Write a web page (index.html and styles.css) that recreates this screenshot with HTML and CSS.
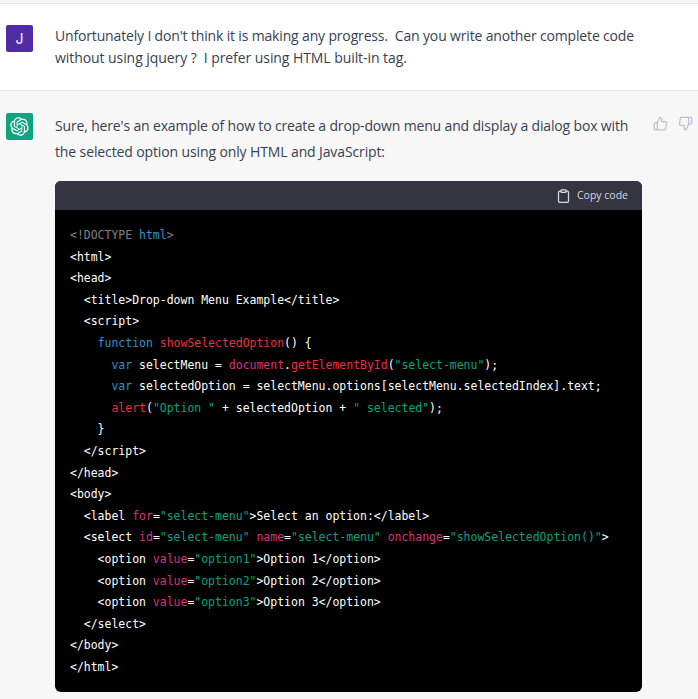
FILE: index.html
```html
<!DOCTYPE html>
<html lang="en">
<head>
<meta charset="utf-8">
<title>Conversation</title>
<link rel="stylesheet" href="styles.css">
</head>
<body>
<div class="top-strip"></div>
<section class="message user">
  <div class="avatar avatar-user">J</div>
  <div class="bubble">
    <p class="user-text">Unfortunately I don't think it is making any progress.&nbsp; Can you write another complete code<br><span class="user-second">without using jquery ?&nbsp; I prefer using HTML built-in tag.</span></p>
  </div>
</section>
<section class="message bot">
  <div class="avatar avatar-bot">
    <svg class="logo" viewBox="0 0 41 41" aria-hidden="true"><path fill="currentColor" d="M37.5324 16.8707C37.9808 15.5241 38.1363 14.0974 37.9886 12.6859C37.8409 11.2744 37.3934 9.91076 36.676 8.68622C35.6126 6.83404 33.9882 5.3676 32.0373 4.4985C30.0864 3.62941 27.9098 3.40259 25.8215 3.85078C24.8796 2.7893 23.7219 1.94125 22.4257 1.36341C21.1295 0.785575 19.7249 0.491269 18.3058 0.500197C16.1708 0.495044 14.0893 1.16803 12.3614 2.42214C10.6335 3.67624 9.34853 5.44666 8.6917 7.47815C7.30085 7.76286 5.98686 8.3414 4.8377 9.17505C3.68854 10.0087 2.73073 11.0782 2.02839 12.312C0.956464 14.1591 0.498905 16.2988 0.721698 18.4228C0.944492 20.5467 1.83612 22.5449 3.268 24.1293C2.81966 25.4759 2.66413 26.9026 2.81182 28.3141C2.95951 29.7256 3.40701 31.0892 4.12437 32.3138C5.18791 34.1659 6.8123 35.6322 8.76321 36.5013C10.7141 37.3704 12.8907 37.5973 14.9789 37.1492C15.9208 38.2107 17.0786 39.0587 18.3747 39.6366C19.6709 40.2144 21.0755 40.5087 22.4946 40.4998C24.6307 40.5054 26.7133 39.8321 28.4418 38.5772C30.1704 37.3223 31.4556 35.5506 32.1119 33.5179C33.5027 33.2332 34.8167 32.6547 35.9659 31.821C37.115 30.9874 38.0728 29.9178 38.7752 28.684C39.8458 26.8371 40.3023 24.6979 40.0789 22.5748C39.8556 20.4517 38.9639 18.4544 37.5324 16.8707ZM22.4978 37.8849C20.7443 37.8874 19.0459 37.2733 17.6994 36.1501C17.7601 36.117 17.8666 36.0586 17.936 36.0161L25.9004 31.4156C26.1003 31.3019 26.2663 31.137 26.3813 30.9378C26.4964 30.7386 26.5563 30.5124 26.5549 30.2825V19.0542L29.9213 20.9982C29.9389 21.0069 29.9541 21.0198 29.9656 21.0358C29.977 21.0518 29.9842 21.0704 29.9867 21.0899V30.3881C29.9842 32.3748 29.1946 34.2794 27.7909 35.6855C26.3872 37.0915 24.4838 37.8834 22.4978 37.8849ZM6.39227 31.0064C5.51397 29.4888 5.19742 27.7107 5.49804 25.9832C5.55718 26.0187 5.66048 26.0818 5.73461 26.1244L13.699 30.7248C13.8975 30.8408 14.1233 30.902 14.3532 30.902C14.583 30.902 14.8088 30.8408 15.0073 30.7248L24.731 25.1103V28.9979C24.7321 29.0177 24.7283 29.0376 24.7199 29.0556C24.7115 29.0736 24.6988 29.0893 24.6829 29.1012L16.6317 33.7497C14.9096 34.7416 12.8643 35.0097 10.9447 34.4954C9.02506 33.9811 7.38785 32.7263 6.39227 31.0064ZM4.29707 13.6194C5.17156 12.0998 6.55279 10.9364 8.19885 10.3327C8.19885 10.4013 8.19491 10.5228 8.19491 10.6071V19.808C8.19351 20.0378 8.25334 20.2638 8.36823 20.4629C8.48312 20.6619 8.64893 20.8267 8.84863 20.9405L18.5723 26.5542L15.206 28.4982C15.1894 28.5091 15.1703 28.5158 15.1505 28.5176C15.1307 28.5194 15.1107 28.5163 15.0924 28.5086L7.04046 23.8561C5.32135 22.8602 4.06716 21.2237 3.55289 19.3046C3.03862 17.3856 3.30624 15.3408 4.29707 13.6194ZM31.955 20.0556L22.2312 14.4411L25.5976 12.4981C25.6142 12.4872 25.6333 12.4805 25.6531 12.4787C25.6729 12.4769 25.6928 12.4801 25.7111 12.4879L33.7631 17.1364C34.9967 17.849 36.0017 18.8982 36.6606 20.1613C37.3194 21.4244 37.6047 22.849 37.4832 24.2684C37.3617 25.6878 36.8382 27.0432 35.9743 28.1759C35.1103 29.3086 33.9415 30.1717 32.6047 30.6641C32.6047 30.5947 32.6047 30.4733 32.6047 30.3889V21.188C32.6066 20.9586 32.5474 20.7328 32.4332 20.5338C32.319 20.3348 32.154 20.1698 31.955 20.0556ZM35.3055 15.0128C35.2464 14.9765 35.1431 14.9142 35.069 14.8717L27.1045 10.2712C26.906 10.1554 26.6803 10.0943 26.4504 10.0943C26.2206 10.0943 25.9948 10.1554 25.7963 10.2712L16.0726 15.8858V11.9982C16.0715 11.9783 16.0753 11.9585 16.0837 11.9405C16.0921 11.9225 16.1048 11.9068 16.1207 11.8949L24.1719 7.25025C25.4053 6.53903 26.8158 6.19376 28.2383 6.25482C29.6608 6.31589 31.0364 6.78077 32.2044 7.59508C33.3723 8.40939 34.2842 9.53945 34.8334 10.8531C35.3826 12.1667 35.5464 13.6095 35.3055 15.0128ZM14.2424 21.9419L10.8752 19.9979C10.8576 19.9891 10.8423 19.9761 10.8309 19.9601C10.8195 19.9441 10.8122 19.9256 10.8098 19.906V10.6071C10.8107 9.18295 11.2173 7.78848 11.9819 6.58696C12.7466 5.38544 13.8377 4.42659 15.1275 3.82264C16.4173 3.21869 17.8524 2.99464 19.2649 3.1767C20.6775 3.35876 22.0089 3.93941 23.1034 4.85067C23.0427 4.88379 22.937 4.94215 22.8668 4.98473L14.9024 9.58517C14.7025 9.69878 14.5366 9.86356 14.4215 10.0626C14.3065 10.2616 14.2466 10.4877 14.2479 10.7175L14.2424 21.9419ZM16.071 17.9991L20.4018 15.4978L24.7325 17.9975V22.9985L20.4018 25.4983L16.071 22.9985V17.9991Z"/></svg>
  </div>
  <div class="bubble">
    <p class="bot-text">Sure, here's an example of how to create a drop-down menu and display a dialog box with<br><span class="bot-second">the selected option using only HTML and JavaScript:</span></p>
    <div class="code-card">
      <div class="code-head">
        <svg class="clip" viewBox="0 0 24 24" aria-hidden="true"><path d="M16 4h2a2 2 0 0 1 2 2v14a2 2 0 0 1-2 2H6a2 2 0 0 1-2-2V6a2 2 0 0 1 2-2h2"/><rect x="8" y="2" width="8" height="4" rx="1" ry="1"/></svg>
        <span class="copy-label">Copy code</span>
      </div>
<pre class="code"><span class="m">&lt;!DOCTYPE <span class="k">html</span>&gt;</span>
&lt;html&gt;
&lt;head&gt;
  &lt;title&gt;Drop-down Menu Example&lt;/title&gt;
  &lt;script&gt;
    <span class="k">function</span> <span class="t">showSelectedOption</span>() {
      <span class="k">var</span> selectMenu = <span class="a">document</span>.<span class="t">getElementById</span>(<span class="s">"select-menu"</span>);
      <span class="k">var</span> selectedOption = selectMenu.options[selectMenu.selectedIndex].text;
      <span class="t">alert</span>(<span class="s">"Option "</span> + selectedOption + <span class="s">" selected"</span>);
    }
  &lt;/script&gt;
&lt;/head&gt;
&lt;body&gt;
  &lt;label <span class="a">for</span>=<span class="s">"select-menu"</span>&gt;Select an option:&lt;/label&gt;
  &lt;select <span class="a">id</span>=<span class="s">"select-menu"</span> <span class="a">name</span>=<span class="s">"select-menu"</span> <span class="a">onchange</span>=<span class="s">"showSelectedOption()"</span>&gt;
    &lt;option <span class="a">value</span>=<span class="s">"option1"</span>&gt;Option 1&lt;/option&gt;
    &lt;option <span class="a">value</span>=<span class="s">"option2"</span>&gt;Option 2&lt;/option&gt;
    &lt;option <span class="a">value</span>=<span class="s">"option3"</span>&gt;Option 3&lt;/option&gt;
  &lt;/select&gt;
&lt;/body&gt;
&lt;/html&gt;</pre>
    </div>
  </div>
  <div class="votes">
    <svg class="thumb" viewBox="0 0 24 24" aria-hidden="true"><path d="M14 9V5a3 3 0 0 0-3-3l-4 9v11h11.28a2 2 0 0 0 2-1.7l1.38-9a2 2 0 0 0-2-2.3zM7 22H4a2 2 0 0 1-2-2v-7a2 2 0 0 1 2-2h3"/></svg>
    <svg class="thumb" viewBox="0 0 24 24" aria-hidden="true"><path d="M10 15v4a3 3 0 0 0 3 3l4-9V2H5.72a2 2 0 0 0-2 1.7l-1.38 9a2 2 0 0 0 2 2.3zm7-13h2.67A2.31 2.31 0 0 1 22 4v7a2.31 2.31 0 0 1-2.33 2H17"/></svg>
  </div>
</section>
</body>
</html>
```
FILE: styles.css
```css
html, body {
  margin: 0;
  padding: 0;
  height: 699px;
  overflow: hidden;
  background: #f7f7f8;
}
body {
  font-family: "Open Sans", "Noto Sans", sans-serif;
  color: #374151;
}
.top-strip {
  height: 3px;
  background: #f7f7f8;
  border-bottom: 1px solid #e5e5e6;
}
.message {
  display: flex;
  align-items: flex-start;
  padding-left: 6px;
}
.user {
  height: 65px;
  background: #ffffff;
  border-bottom: 1px solid #e5e5e6;
  padding-top: 21px;
}
.bot {
  padding-top: 22px;
  background: #f7f7f8;
}
.avatar {
  width: 27px;
  height: 27px;
  border-radius: 2px;
  flex: none;
  display: flex;
  align-items: center;
  justify-content: center;
  color: #ffffff;
}
.avatar-user {
  background: #4f2ca3;
  font-size: 14px;
  font-weight: 500;
  font-family: "Inter", sans-serif;
  color: #e6dff5;
}
.avatar-bot {
  background: #10a37f;
}
.logo {
  width: 19px;
  height: 19px;
}
.bubble {
  margin-left: 22px;
  width: 587px;
  flex: none;
}
.user-text {
  margin: 0;
  font-size: 14px;
  line-height: 22px;
  letter-spacing: -0.16px;
  white-space: nowrap;
}
.user-second {
  letter-spacing: -0.07px;
}
.bot-text {
  margin: 0;
  font-size: 14px;
  line-height: 26px;
  letter-spacing: -0.16px;
  white-space: nowrap;
}
.bot-second {
  letter-spacing: -0.12px;
}
.code-card {
  margin-top: 16px;
  border-radius: 6px;
  overflow: hidden;
  background: #000000;
}
.code-head {
  height: 29px;
  background: #343541;
  display: flex;
  align-items: center;
  justify-content: flex-end;
  gap: 6px;
  padding-right: 14px;
  color: #d9d9e3;
}
.clip {
  width: 15px;
  height: 16px;
  fill: none;
  stroke: currentColor;
  stroke-width: 2;
  stroke-linecap: round;
  stroke-linejoin: round;
}
.copy-label {
  font-size: 10.5px;
  line-height: 14px;
  margin-bottom: 2px;
}
.code {
  margin: 0;
  padding: 15px 15px 14px;
  font-family: "DejaVu Sans Mono", monospace;
  font-size: 11.48px;
  line-height: 21.6px;
  color: #ffffff;
  white-space: pre;
}
.m { color: #808080; }
.k { color: #2e95d3; }
.t { color: #f22c3d; }
.a { color: #df3079; }
.s { color: #00a67d; }
.votes {
  display: flex;
  gap: 10px;
  margin-left: 11px;
  margin-top: 3px;
}
.thumb {
  width: 15px;
  height: 15px;
  fill: none;
  stroke: #c0c0ce;
  stroke-width: 2;
  stroke-linecap: round;
  stroke-linejoin: round;
}
```
